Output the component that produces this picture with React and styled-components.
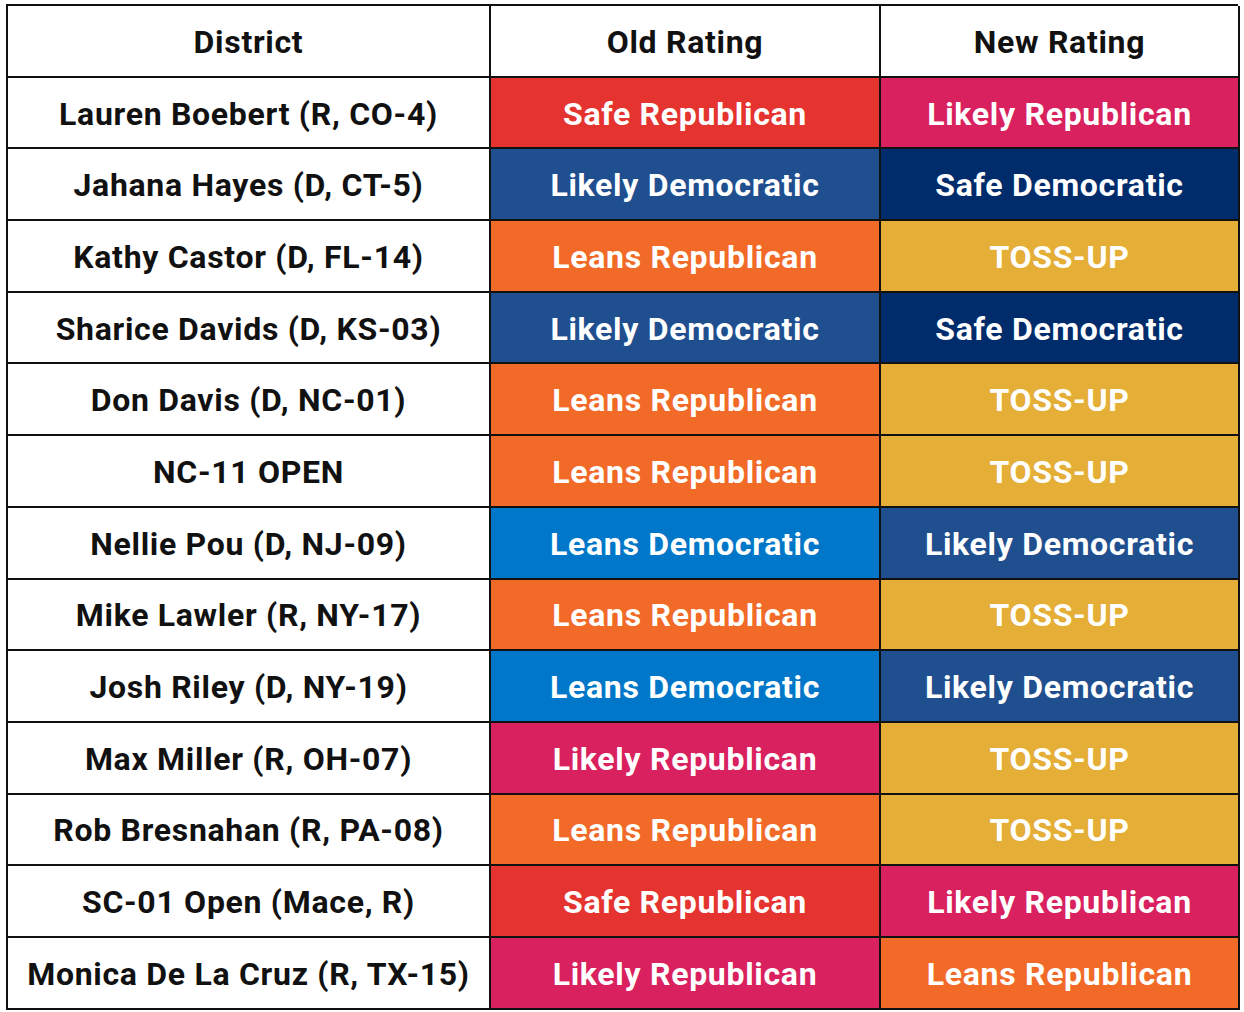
import React from 'react';
import styled, { createGlobalStyle } from 'styled-components';

const GlobalStyle = createGlobalStyle`
  html, body {
    margin: 0;
    padding: 0;
    background: #ffffff;
  }
  body {
    font-family: Roboto, "Liberation Sans", Arial, sans-serif;
  }
`;

const Page = styled.div`
  padding: 4px 6px;
`;

const Table = styled.div`
  display: grid;
  grid-template-columns: 483px 390px 359px;
  grid-auto-rows: 71.7px;
  width: 1232px;
  border-top: 2px solid #111;
  border-left: 2px solid #111;
  box-sizing: border-box;
`;

const colors = {
  'Safe Republican': '#e5332f',
  'Likely Republican': '#d8215e',
  'Leans Republican': '#f26a27',
  'TOSS-UP': '#e4ae37',
  'Leans Democratic': '#0077c8',
  'Likely Democratic': '#1f4f8f',
  'Safe Democratic': '#002c6c',
};

const Cell = styled.div`
  display: flex;
  align-items: center;
  justify-content: center;
  border-right: 2px solid #111;
  border-bottom: 2px solid #111;
  font-size: 32px;
  font-weight: 700;
  letter-spacing: 0.7px;
  white-space: nowrap;
  padding-top: 2px;
  background: ${(p) => p.$bg || '#ffffff'};
  color: ${(p) => (p.$bg ? '#ffffff' : '#111111')};
`;

const rows = [
  ['Lauren Boebert (R, CO-4)', 'Safe Republican', 'Likely Republican'],
  ['Jahana Hayes (D, CT-5)', 'Likely Democratic', 'Safe Democratic'],
  ['Kathy Castor (D, FL-14)', 'Leans Republican', 'TOSS-UP'],
  ['Sharice Davids (D, KS-03)', 'Likely Democratic', 'Safe Democratic'],
  ['Don Davis (D, NC-01)', 'Leans Republican', 'TOSS-UP'],
  ['NC-11 OPEN', 'Leans Republican', 'TOSS-UP'],
  ['Nellie Pou (D, NJ-09)', 'Leans Democratic', 'Likely Democratic'],
  ['Mike Lawler (R, NY-17)', 'Leans Republican', 'TOSS-UP'],
  ['Josh Riley (D, NY-19)', 'Leans Democratic', 'Likely Democratic'],
  ['Max Miller (R, OH-07)', 'Likely Republican', 'TOSS-UP'],
  ['Rob Bresnahan (R, PA-08)', 'Leans Republican', 'TOSS-UP'],
  ['SC-01 Open (Mace, R)', 'Safe Republican', 'Likely Republican'],
  ['Monica De La Cruz (R, TX-15)', 'Likely Republican', 'Leans Republican'],
];

const App = () => (
  <Page>
    <GlobalStyle />
    <Table>
      <Cell>District</Cell>
      <Cell>Old Rating</Cell>
      <Cell>New Rating</Cell>
      {rows.map(([district, oldR, newR]) => (
        <React.Fragment key={district}>
          <Cell>{district}</Cell>
          <Cell $bg={colors[oldR]}>{oldR}</Cell>
          <Cell $bg={colors[newR]}>{newR}</Cell>
        </React.Fragment>
      ))}
    </Table>
  </Page>
);

export default App;
